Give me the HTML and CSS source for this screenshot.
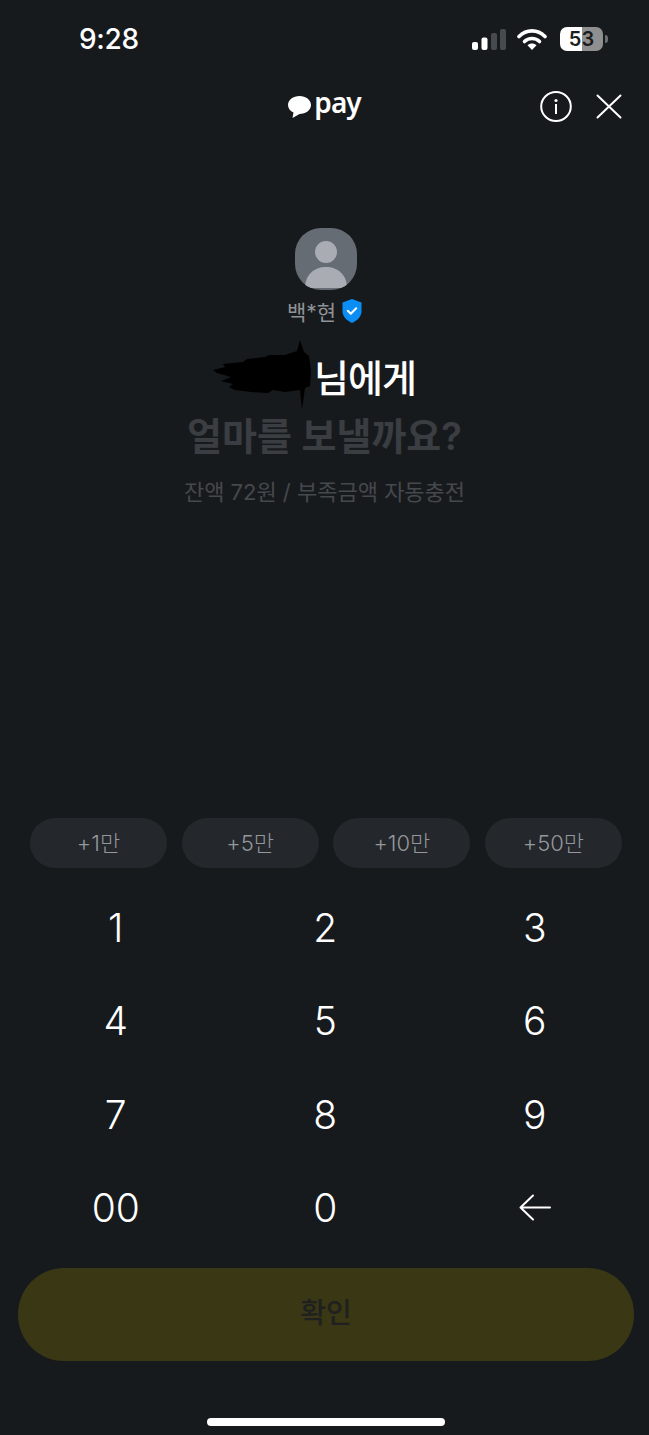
FILE: index.html
```html
<!DOCTYPE html>
<html lang="ko">
<head>
	<meta charset="UTF-8">
	<title>pay</title>
	<link rel="stylesheet" href="styles.css">
</head>
<body>
	<div class="page">
		<div class="status">
			<span class="time">9:28</span>
			<div class="status-icons">
				<svg class="signal" width="34" height="21" viewBox="0 0 34 21">
					<rect x="0" y="13" width="6" height="8" rx="2" fill="#fff"/>
					<rect x="9.500" y="8.500" width="6" height="12.500" rx="2" fill="#fff"/>
					<rect x="19" y="4" width="6" height="17" rx="2" fill="#484b4e"/>
					<rect x="28" y="0" width="6" height="21" rx="2" fill="#484b4e"/>
				</svg>
				<svg class="wifi" width="30" height="22" viewBox="0 0 30 22">
					<path d="M2 8.500C9.500 1 20.500 1 28 8.500" fill="none" stroke="#fff" stroke-width="3.600" stroke-linecap="round"/>
					<path d="M7.500 13.500C11.500 9.500 18.500 9.500 22.500 13.500" fill="none" stroke="#fff" stroke-width="3.600" stroke-linecap="round"/>
					<path d="M15 22L10.500 17.200C13 15 17 15 19.500 17.200Z" fill="#fff"/>
				</svg>
				<div class="battery">53</div>
				<div class="battery-nub"></div>
			</div>
		</div>

		<div class="nav">
			<div></div>
			<div class="logo">
				<svg width="23" height="22" viewBox="0 0 23 22">
					<path d="M11.500 0C17.800 0 23 3.900 23 9C23 14.100 17.800 18 11.500 18L4.500 22L5.500 16.500C2.200 15 0 12.300 0 9C0 3.900 5.200 0 11.500 0Z" fill="#fff"/>
				</svg>
				<span class="logo-text">pay</span>
			</div>
			<div class="nav-right">
				<svg width="32" height="31" viewBox="0 0 32 31">
					<ellipse cx="16" cy="15.500" rx="14.800" ry="14.500" fill="none" stroke="#fff" stroke-width="2"/>
					<circle cx="16" cy="9.500" r="1.600" fill="#fff"/>
					<rect x="15" y="13" width="2" height="10" fill="#fff"/>
				</svg>
				<svg width="26" height="25" viewBox="0 0 26 25">
					<path d="M1.500 1.500L24.500 23.500M24.500 1.500L1.500 23.500" stroke="#fff" stroke-width="2" stroke-linecap="round"/>
				</svg>
			</div>
		</div>

		<div class="profile">
			<div class="avatar">
				<svg width="62" height="62" viewBox="0 0 62 62">
					<circle cx="31" cy="24" r="11" fill="#a9adb3"/>
					<path d="M10 60C10 47 19 39 31 39C43 39 52 47 52 60Z" fill="#a9adb3"/>
				</svg>
			</div>
			<div class="name">
				<span>백*현</span>
				<svg width="20" height="24" viewBox="0 0 20 24">
					<path d="M10 0L19.500 3.500V12C19.500 17.500 15.500 21.500 10 24C4.500 21.500 0.500 17.500 0.500 12V3.500Z" fill="#0a8df5"/>
					<path d="M5.800 11.800L8.800 14.800L14.200 9.200" fill="none" stroke="#fff" stroke-width="2" stroke-linecap="round" stroke-linejoin="round"/>
				</svg>
			</div>
		</div>

		<div class="title">
			<svg class="scribble" width="100" height="70" viewBox="0 0 100 70">
				<path d="M0 30L12 27L10 24L30 22L34 19L52 17L56 15L72 15L84 11L87 0L91 12L96 16L98 30L97 46L92 48L89 70L87 50L72 52L60 50L55 53L38 52L22 50L16 47L20 44L8 41L18 37L4 33Z" fill="#000"/>
			</svg>
			<span>님에게</span>
		</div>
		<div class="question">얼마를 보낼까요?</div>
		<div class="balance">잔액 72원 / 부족금액 자동충전</div>

		<div class="chips">
			<div class="chip">+1만</div>
			<div class="chip">+5만</div>
			<div class="chip">+10만</div>
			<div class="chip">+50만</div>
		</div>

		<div class="keypad">
			<div class="key">1</div>
			<div class="key">2</div>
			<div class="key">3</div>
			<div class="key">4</div>
			<div class="key">5</div>
			<div class="key">6</div>
			<div class="key">7</div>
			<div class="key">8</div>
			<div class="key">9</div>
			<div class="key">00</div>
			<div class="key">0</div>
			<div class="key">
				<svg width="32" height="27" viewBox="0 0 32 27">
					<path d="M14 1.500L1.500 13.500L14 25.500M1.500 13.500H31" fill="none" stroke="#fff" stroke-width="2" stroke-linecap="round" stroke-linejoin="round"/>
				</svg>
			</div>
		</div>

		<div class="confirm">확인</div>
		<div class="home-bar"></div>
	</div>
</body>
</html>
```

FILE: styles.css
```css
*{
	box-sizing: border-box;
}

body{
	margin: 0;
	background-color: #171a1d;
	font-family: "Inter", "Noto Sans CJK KR", sans-serif;
	color: #fff;
}

.page{
	display: flex;
	flex-direction: column;
	height: 1435px;
	overflow: hidden;
}

.status{
	display: flex;
	align-items: center;
	justify-content: space-between;
	height: 78px;
	padding: 0 41px 0 79px;
}

.time{
	font-size: 28px;
	font-weight: 500;
	letter-spacing: -0.300px;
}

.status-icons{
	display: flex;
	align-items: center;
}

.wifi{
	margin-left: 11px;
}

.battery{
	width: 43px;
	height: 24px;
	margin-left: 13px;
	border-radius: 7px;
	background: linear-gradient(to right, #fff 52%, #8f8f8f 52%);
	color: #1b1d20;
	font-family: "Inter", sans-serif;
	font-size: 20px;
	font-weight: 600;
	line-height: 24px;
	text-align: center;
}

.battery-nub{
	width: 3px;
	height: 8px;
	margin-left: 2px;
	border-radius: 0 3px 3px 0;
	background-color: #6d6e70;
}

.nav{
	display: grid;
	grid-template-columns: 1fr auto 1fr;
	align-items: center;
	height: 56px;
}

.logo{
	display: flex;
	align-items: center;
	gap: 3px;
}

.logo svg{
	margin-top: 2px;
}

.logo-text{
	font-family: "Noto Sans", sans-serif;
	font-size: 28px;
	font-weight: 600;
	line-height: 30px;
	letter-spacing: -1px;
	transform: translateY(-4px);
}

.nav-right{
	display: flex;
	align-items: center;
	justify-content: flex-end;
	gap: 24px;
	padding-right: 27px;
}

.profile{
	display: flex;
	flex-direction: column;
	align-items: center;
	margin-top: 94px;
}

.avatar{
	width: 62px;
	height: 62px;
	margin-left: 2px;
	border-radius: 26px;
	background-color: #666c73;
	overflow: hidden;
}

.name{
	display: flex;
	align-items: center;
	justify-content: center;
	gap: 6px;
	height: 24px;
	margin-top: 9px;
	font-size: 21px;
	color: #8f9296;
}

.title{
	display: flex;
	align-items: center;
	justify-content: center;
	height: 50px;
	margin-top: 27px;
	padding-right: 20px;
	font-size: 38px;
	font-weight: 500;
	letter-spacing: -1px;
}

.scribble{
	flex: none;
	margin: 0 1px 0 0;
}

.question{
	margin-top: 8px;
	font-size: 38px;
	font-weight: 600;
	line-height: 56px;
	text-align: center;
	color: #3a3d41;
}

.balance{
	margin-top: 12px;
	font-size: 22px;
	line-height: 32px;
	text-align: center;
	color: #45484c;
}

.chips{
	display: flex;
	justify-content: space-between;
	margin-top: 310px;
	padding: 0 27px 0 30px;
}

.chip{
	width: 137px;
	height: 50px;
	border-radius: 25px;
	background-color: #24272b;
	font-size: 22px;
	font-weight: 300;
	line-height: 50px;
	text-align: center;
	color: #94979b;
}

.keypad{
	display: grid;
	grid-template-columns: repeat(3, 209.5px);
	grid-auto-rows: 93.3px;
	margin-top: 13px;
	padding-left: 11px;
}

.key{
	display: flex;
	align-items: center;
	justify-content: center;
	font-size: 39px;
	font-weight: 300;
}

.confirm{
	align-self: flex-start;
	width: 616px;
	height: 93px;
	margin: 14px 0 0 18px;
	border-radius: 46px;
	background-color: #393714;
	font-size: 28px;
	font-weight: 500;
	line-height: 90px;
	text-align: center;
	color: #1f2020;
}

.home-bar{
	align-self: flex-start;
	width: 238px;
	height: 8px;
	margin: 57px 0 0 207px;
	border-radius: 4px;
	background-color: #fff;
}
```
